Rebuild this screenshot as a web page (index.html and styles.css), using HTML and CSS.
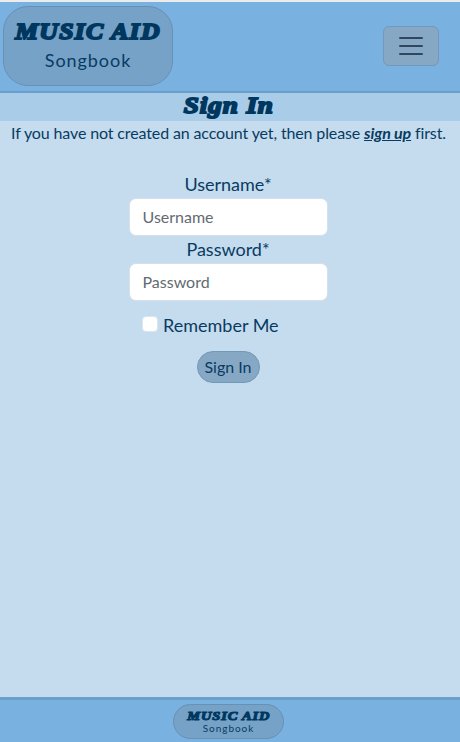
FILE: index.html
```html
<!DOCTYPE html>
<html lang="en">
<head>
<meta charset="utf-8">
<meta name="viewport" content="width=device-width, initial-scale=1">
<title>Music Aid Songbook</title>
<link rel="stylesheet" href="styles.css">
</head>
<body>
<header class="navbar">
  <a class="brand"><span class="brand-name">MUSIC AID</span><span class="brand-sub">Songbook</span></a>
  <button class="toggler" aria-label="Menu">
    <svg width="30" height="30" viewBox="0 0 30 30"><path d="M4 7h22M4 15h22M4 23h22" stroke="#2f485f" stroke-width="2" stroke-linecap="round"/></svg>
  </button>
</header>
<main>
  <h1 class="title"><span>Sign In</span></h1>
  <p class="intro">If you have not created an account yet, then please <a class="link">sign up</a> first.</p>
  <form class="form">
    <label class="label" for="user">Username*</label>
    <input class="field" id="user" type="text" placeholder="Username">
    <label class="label" for="pass">Password*</label>
    <input class="field" id="pass" type="password" placeholder="Password">
    <div class="remember"><input class="check" id="rem" type="checkbox"><label for="rem">Remember Me</label></div>
    <button class="submit" type="button">Sign In</button>
  </form>
</main>
<footer class="footer">
  <a class="brand brand-small"><span class="brand-name">MUSIC AID</span><span class="brand-sub">Songbook</span></a>
</footer>
</body>
</html>
```
FILE: styles.css
```css
* { box-sizing: border-box; }
body {
  margin: 0;
  height: 742px;
  display: flex;
  flex-direction: column;
  overflow: hidden;
  background: #c5dbee;
  color: #093b62;
  font-family: Lato, sans-serif;
  font-size: 16px;
  line-height: 24px;
}
.navbar {
  height: 93px;
  display: flex;
  justify-content: space-between;
  align-items: flex-start;
  padding: 4px 21px 0 3px;
  background: #79b2e0;
  border-top: 2px solid #ececec;
  border-bottom: 2px solid #6a9fca;
}
.brand {
  width: 170px;
  height: 80px;
  display: flex;
  flex-direction: column;
  align-items: center;
  padding-top: 9px;
  background: #76a2c8;
  border: 1px solid #6890b5;
  border-radius: 25px;
}
.brand-name, .title span {
  font-family: "Liberation Serif", serif;
  font-weight: 700;
  font-style: italic;
  color: #00375f;
  -webkit-text-stroke: 1.9px #00375f;
  white-space: nowrap;
}
.brand-name {
  font-size: 24px;
  line-height: 30px;
  letter-spacing: 1.2px;
  transform: scaleX(1.07);
}
.brand-sub {
  font-size: 18px;
  line-height: 28px;
  letter-spacing: 0.95px;
}
.toggler {
  width: 56px;
  height: 40px;
  margin-top: 20px;
  padding: 4px 12px;
  background: #87a8c5;
  border: 1px solid #7498b9;
  border-radius: 6px;
}
.toggler svg { display: block; }
main { flex: 1; }
.title {
  margin: 0;
  height: 28px;
  padding-right: 2px;
  background: #a9cde8;
  text-align: center;
  font-size: 24px;
  line-height: 21px;
}
.title span {
  display: inline-block;
  letter-spacing: 0.8px;
  transform: scaleX(1.13);
}
.intro {
  margin: 0;
  padding-right: 3px;
  text-align: center;
  white-space: nowrap;
  letter-spacing: -0.13px;
}
.link {
  font-weight: 700;
  font-style: italic;
  text-decoration: underline;
}
.form {
  width: 200px;
  margin: 26px 0 0 128px;
  display: flex;
  flex-direction: column;
  align-items: center;
}
.label {
  font-size: 18px;
  line-height: 27px;
}
.field {
  width: 199px;
  height: 38px;
  padding: 5px 13px 7px;
  border: 1px solid #d5e0ea;
  border-radius: 7px;
  background: #fff;
  font: 16px/24px Lato, sans-serif;
}
.field::placeholder { color: #636b72; opacity: 1; }
.remember {
  align-self: flex-start;
  display: flex;
  align-items: center;
  margin: 11px 0 0 14px;
  gap: 5px;
  font-size: 18px;
  line-height: 27px;
}
.check {
  appearance: none;
  width: 16px;
  height: 16px;
  margin: 0 0 3px;
  background: #fff;
  border: 1px solid #dbe5ef;
  border-radius: 4px;
}
.submit {
  width: 63px;
  height: 32px;
  margin-top: 12px;
  padding: 0;
  background: #87a8c5;
  border: 1px solid #7498b7;
  border-radius: 16px;
  color: #093b62;
  font: 16px/24px Lato, sans-serif;
}
.footer {
  height: 45px;
  display: flex;
  justify-content: center;
  padding: 4px 3px 0 0;
  background: #79b2e0;
  border-top: 3px solid #6a9fca;
}
.brand-small {
  width: 111px;
  height: 35px;
  padding-top: 4px;
  border-radius: 18px;
}
.brand-small .brand-name {
  font-size: 13.5px;
  line-height: 14px;
  letter-spacing: 0.8px;
  -webkit-text-stroke-width: 1.1px;
}
.brand-small .brand-sub {
  font-size: 10px;
  line-height: 11px;
  letter-spacing: 0.95px;
}
```
